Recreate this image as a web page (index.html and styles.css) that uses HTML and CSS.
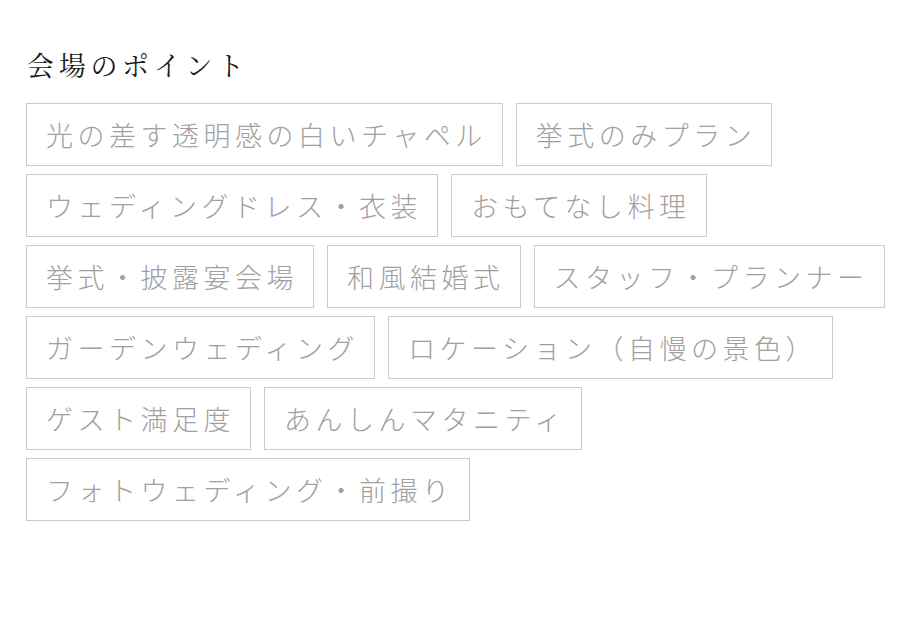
FILE: index.html
```html
<!DOCTYPE html>
<html lang="ja">
<head>
<meta charset="utf-8">
<title>会場のポイント</title>
<link rel="stylesheet" href="styles.css">
</head>
<body>
<section class="points">
  <h2 class="points-title">会場のポイント</h2>
  <ul class="tag-list">
    <li class="tag">光の差す透明感の白いチャペル</li>
    <li class="tag">挙式のみプラン</li>
    <li class="tag">ウェディングドレス・衣装</li>
    <li class="tag">おもてなし料理</li>
    <li class="tag">挙式・披露宴会場</li>
    <li class="tag">和風結婚式</li>
    <li class="tag">スタッフ・プランナー</li>
    <li class="tag">ガーデンウェディング</li>
    <li class="tag">ロケーション（自慢の景色）</li>
    <li class="tag">ゲスト満足度</li>
    <li class="tag">あんしんマタニティ</li>
    <li class="tag">フォトウェディング・前撮り</li>
  </ul>
</section>
</body>
</html>
```

FILE: styles.css
```css
html, body {
  margin: 0;
  padding: 0;
  background: #ffffff;
}

body {
  font-family: "Noto Sans CJK JP", "Noto Sans", sans-serif;
}

.points {
  padding: 46px 20px 0 26px;
}

.points-title {
  margin: 0 0 19px 1px;
  font-family: "Noto Serif CJK JP", "Noto Sans CJK JP", serif;
  font-size: 27px;
  line-height: 38px;
  font-weight: 400;
  letter-spacing: 4.7px;
  color: #1a1a1a;
}

.tag-list {
  list-style: none;
  margin: 0;
  padding: 0;
  display: flex;
  flex-wrap: wrap;
  gap: 8px 13px;
}

.tag {
  display: flex;
  align-items: center;
  height: 61px;
  padding: 0 15px 0 19px;
  border: 1px solid #cccccc;
  font-size: 27px;
  font-weight: 300;
  letter-spacing: 4.5px;
  color: #a0a0a0;
  white-space: nowrap;
}
```
